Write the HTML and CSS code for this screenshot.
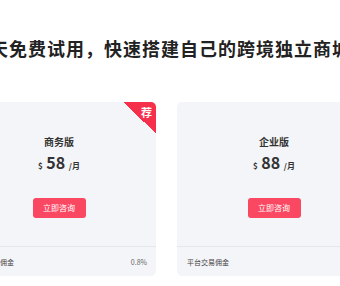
FILE: index.html
```html
<!DOCTYPE html>
<html lang="zh-CN">
<head>
  <meta charset="UTF-8">
  <title>套餐价格</title>
  <link rel="stylesheet" href="styles.css">
</head>
<body>
  <div class="page">
    <h2 class="headline">天免费试用，快速搭建自己的跨境独立商城</h2>

    <div class="plans">
      <div class="plan">
        <div class="plan-tag"><span>荐</span></div>
        <div class="plan-body">
          <h3>商务版</h3>
          <div class="price"><span class="cur">$</span> <span class="num">58</span> <span class="unit">/月</span></div>
          <a class="plan-button" href="#">立即咨询</a>
        </div>
        <div class="plan-foot">
          <span>平台交易佣金</span>
          <span class="rate">0.8%</span>
        </div>
      </div>

      <div class="plan">
        <div class="plan-body">
          <h3>企业版</h3>
          <div class="price"><span class="cur">$</span> <span class="num">88</span> <span class="unit">/月</span></div>
          <a class="plan-button" href="#">立即咨询</a>
        </div>
        <div class="plan-foot">
          <span>平台交易佣金</span>
          <span class="rate">0%</span>
        </div>
      </div>
    </div>
  </div>
</body>
</html>
```

FILE: styles.css
```css
body {
  margin: 0;
  background-color: #fff;
  font-family: "Noto Sans CJK SC", "Noto Sans", sans-serif;
  color: #333;
  overflow: hidden;
}

.page {
  width: 340px;
  height: 286px;
  overflow: hidden;
}

.headline {
  margin: 0;
  padding-top: 34px;
  margin-left: -10px;
  white-space: nowrap;
  font-size: 18px;
  line-height: 28px;
  font-weight: bold;
  letter-spacing: 1px;
  color: #222;
}

.plans {
  display: flex;
  gap: 21px;
  margin-top: 40px;
  margin-left: -38px;
}

.plan {
  position: relative;
  flex: 0 0 194px;
  height: 174px;
  background-color: #f4f5f8;
  border-radius: 5px;
  overflow: hidden;
  display: flex;
  flex-direction: column;
}

.plan-tag {
  position: absolute;
  top: 0;
  right: 0;
  width: 32px;
  height: 32px;
  background: linear-gradient(45deg, transparent 50%, #f6304b 50%);
}

.plan-tag span {
  position: absolute;
  top: 3px;
  right: 4px;
  font-size: 11px;
  line-height: 14px;
  font-weight: bold;
  color: #fff;
}

.plan-body {
  flex: 1;
  text-align: center;
  padding-top: 33px;
}

.plan-body h3 {
  margin: 0;
  font-size: 10px;
  line-height: 14px;
  font-weight: bold;
  color: #333;
}

.price {
  margin-top: 3px;
  line-height: 20px;
  color: #333;
}

.price .cur {
  font-size: 8px;
  font-weight: bold;
}

.price .num {
  font-size: 16px;
  font-weight: bold;
}

.price .unit {
  font-size: 8px;
  font-weight: bold;
}

.plan-button {
  display: inline-block;
  margin-top: 22px;
  width: 53px;
  height: 20px;
  line-height: 20px;
  background-color: #fb4862;
  border-radius: 3px;
  color: #fff;
  font-size: 8px;
  text-decoration: none;
}

.plan-foot {
  display: flex;
  justify-content: space-between;
  align-items: center;
  height: 29px;
  padding: 0 9px 0 10px;
  border-top: 1px solid #e6e7eb;
  font-size: 7px;
  color: #444;
}

.plan-foot .rate {
  color: #666;
}
```
